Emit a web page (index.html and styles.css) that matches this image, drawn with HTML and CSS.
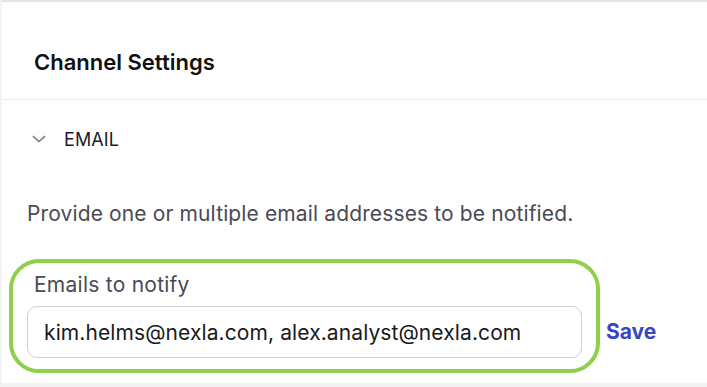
FILE: index.html
```html
<!DOCTYPE html>
<html>
<head>
<meta charset="utf-8">
<link rel="stylesheet" href="styles.css">
</head>
<body>
<div class="panel">
  <div class="header"><h2 class="title">Channel Settings</h2></div>
  <div class="section">
    <div class="toggle">
      <svg class="chev" width="14" height="8" viewBox="0 0 14 8"><path d="M1 1.2 L7 6.5 L13 1.2" fill="none" stroke="#7a7a80" stroke-width="1.6"/></svg>
      <span class="toggle-label">EMAIL</span>
    </div>
    <p class="desc">Provide one or multiple email addresses to be notified.</p>
    <div class="field-row">
      <div class="highlight">
        <label class="label">Emails to notify</label>
        <div class="input">kim.helms@nexla.com, alex.analyst@nexla.com</div>
      </div>
      <span class="save">Save</span>
    </div>
  </div>
</div>
</body>
</html>
```
FILE: styles.css
```css
html, body { margin: 0; padding: 0; }
body {
  background: #f3f3f4;
  font-family: Inter, "Noto Sans", sans-serif;
  width: 707px;
  height: 387px;
  overflow: hidden;
}
.panel {
  background: #fff;
  border-top: 2px solid #e4e4e6;
  margin-left: 2px;
  height: 383px;
  box-sizing: border-box;
}
.header {
  height: 98px;
  border-bottom: 1px solid #ececee;
  display: flex;
  align-items: center;
  padding-left: 32px;
  box-sizing: border-box;
}
.title {
  margin: 0;
  font-size: 22px;
  font-weight: 600;
  color: #111;
  padding-top: 22px;
  line-height: 26px;
}
.section { padding: 0 0 0 25px; }
.toggle {
  display: flex;
  align-items: center;
  height: 78px;
  padding-left: 5px;
}
.chev { margin-right: 18px; }
.toggle-label { font-size: 18px; color: #1a1a2a; letter-spacing: 0.1px; }
.desc {
  margin: 0;
  font-size: 21px;
  color: #4a4a55;
  line-height: 24px;
  padding-top: 24px;
  letter-spacing: 0.13px;
}
.field-row {
  display: flex;
  align-items: flex-end;
  margin-top: 33px;
  margin-left: -18px;
}
.highlight {
  border: 4px solid #8fcf4c;
  border-radius: 30px;
  width: 591px;
  height: 114px;
  box-sizing: border-box;
  padding: 10px 14px 0 14px;
}
.label {
  display: block;
  font-size: 21px;
  color: #4a4a55;
  padding-left: 7px;
  line-height: 24px;
  letter-spacing: 0.25px;
}
.input {
  margin-top: 9px;
  height: 52px;
  border: 1px solid #cfd0d6;
  border-radius: 10px;
  box-sizing: border-box;
  padding-left: 16px;
  display: flex;
  align-items: center;
  font-size: 21px;
  color: #1a1a1a;
  letter-spacing: 0.1px;
}
.save {
  font-size: 21px;
  font-weight: 700;
  color: #3647c4;
  margin-left: 6px;
  margin-bottom: 29px;
}
```
